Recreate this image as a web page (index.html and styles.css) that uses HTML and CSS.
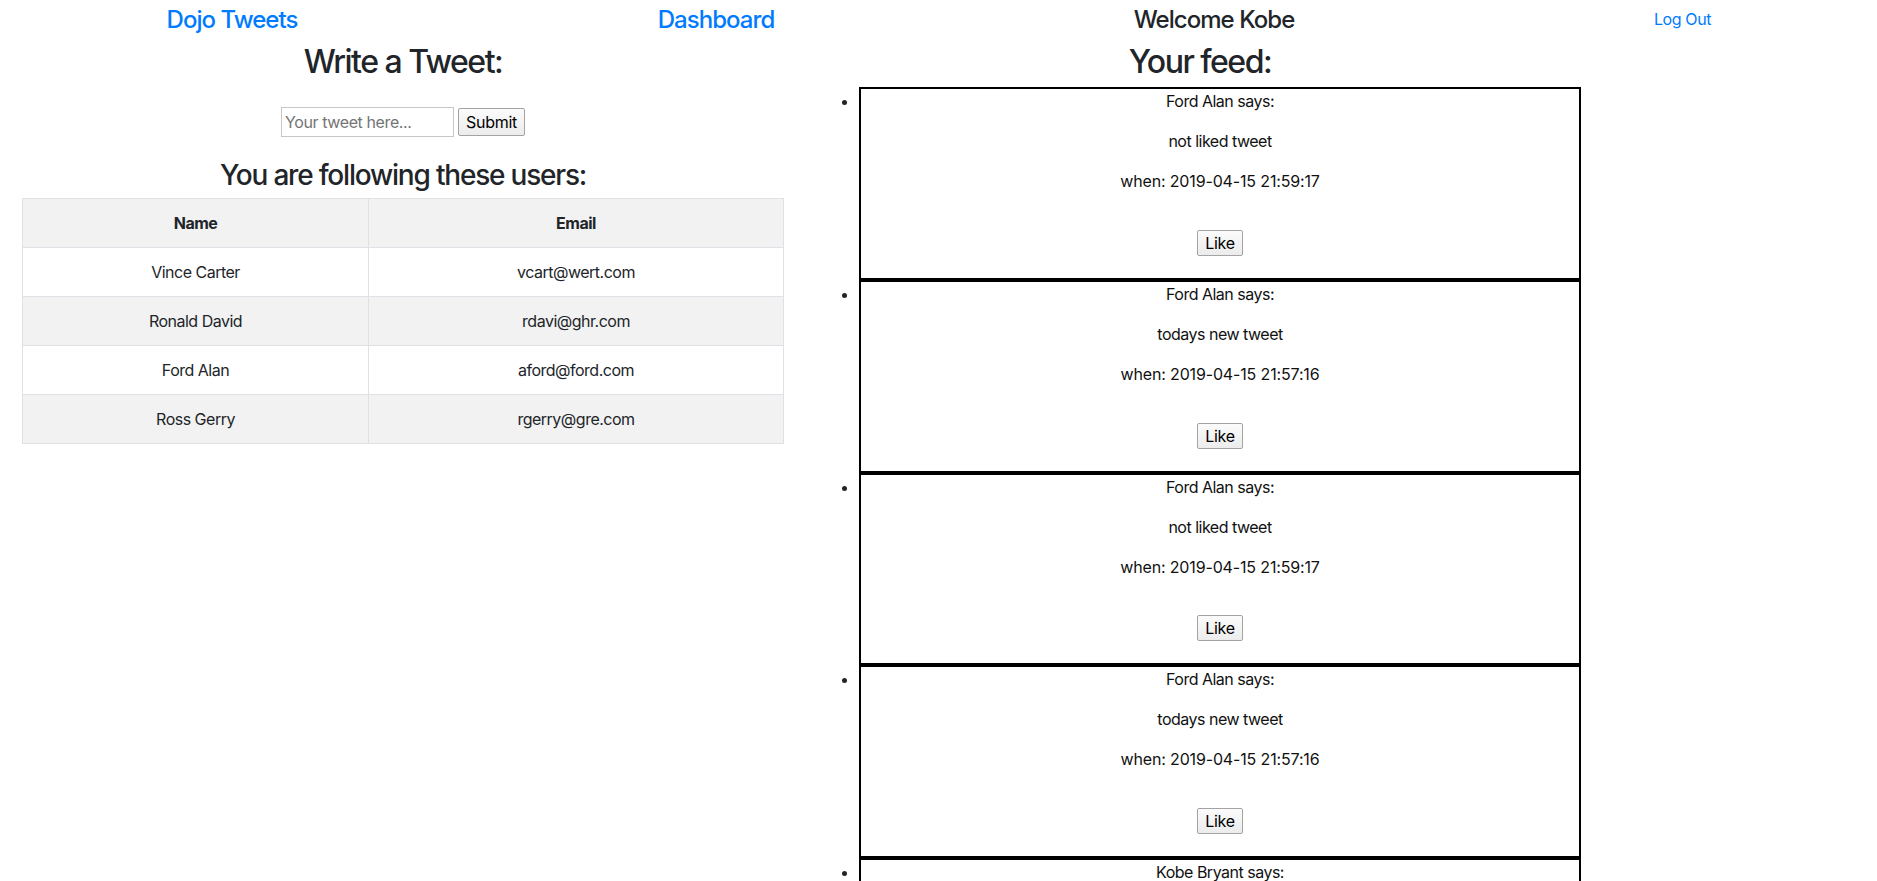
FILE: index.html
```html
<!DOCTYPE html>
<html lang="en">
<head>
<meta charset="utf-8">
<title>Dojo Tweets</title>
<link rel="stylesheet" href="styles.css">
</head>
<body>
<header class="topbar">
  <h4 class="nav-item nav-brand"><a href="#" class="link">Dojo Tweets</a></h4>
  <h4 class="nav-item nav-dash"><a href="#" class="link">Dashboard</a></h4>
  <h4 class="nav-item nav-welcome">Welcome Kobe</h4>
  <div class="nav-item nav-logout"><a href="#" class="link">Log Out</a></div>
</header>
<main class="page">
  <section class="col col-left">
    <h2 class="title">Write a Tweet:</h2>
    <form class="tweet-form">
      <input class="tweet-input" type="text" placeholder="Your tweet here...">
      <button class="btn" type="button">Submit</button>
    </form>
    <h3 class="subtitle">You are following these users:</h3>
    <table class="users">
      <thead>
        <tr><th class="c-name">Name</th><th class="c-email">Email</th></tr>
      </thead>
      <tbody>
        <tr><td>Vince Carter</td><td>vcart@wert.com</td></tr>
        <tr class="striped"><td>Ronald David</td><td>rdavi@ghr.com</td></tr>
        <tr><td>Ford Alan</td><td>aford@ford.com</td></tr>
        <tr class="striped"><td>Ross Gerry</td><td>rgerry@gre.com</td></tr>
      </tbody>
    </table>
  </section>
  <section class="col col-right">
    <h2 class="title">Your feed:</h2>
    <ul class="feed">
      <li><div class="tweet">
        <p>Ford Alan says:</p>
        <p>not liked tweet</p>
        <p class="when">when: 2019-04-15 21:59:17</p>
        <form class="like-form"><button class="btn" type="button">Like</button></form>
      </div></li>
      <li><div class="tweet">
        <p>Ford Alan says:</p>
        <p>todays new tweet</p>
        <p class="when">when: 2019-04-15 21:57:16</p>
        <form class="like-form"><button class="btn" type="button">Like</button></form>
      </div></li>
      <li><div class="tweet">
        <p>Ford Alan says:</p>
        <p>not liked tweet</p>
        <p class="when">when: 2019-04-15 21:59:17</p>
        <form class="like-form"><button class="btn" type="button">Like</button></form>
      </div></li>
      <li><div class="tweet">
        <p>Ford Alan says:</p>
        <p>todays new tweet</p>
        <p class="when">when: 2019-04-15 21:57:16</p>
        <form class="like-form"><button class="btn" type="button">Like</button></form>
      </div></li>
      <li><div class="tweet">
        <p>Kobe Bryant says:</p>
        <p>my first tweet</p>
        <p class="when">when: 2019-04-15 21:50:02</p>
        <form class="like-form"><button class="btn" type="button">Like</button></form>
      </div></li>
    </ul>
  </section>
</main>
</body>
</html>
```
FILE: styles.css
```css
html, body {
  margin: 0;
  padding: 0;
}
body {
  font-family: "Inter", "Noto Sans", "Liberation Sans", sans-serif;
  font-size: 16px;
  line-height: 24px;
  letter-spacing: -0.5px;
  color: #212529;
  background: #fff;
}
.link {
  color: #007bff;
  text-decoration: none;
}
.topbar {
  display: flex;
  align-items: flex-start;
  padding: 6px 0 0 112px;
  height: 34.8px;
}
.nav-item {
  width: 240px;
  flex: 0 0 240px;
  text-align: center;
  margin: 0;
}
h4.nav-item {
  font-size: 24px;
  line-height: 28.8px;
  font-weight: 500;
  letter-spacing: -0.04em;
}
.nav-dash { margin-left: 244px; }
.nav-welcome { margin-left: 258px; }
.nav-logout {
  margin-left: 228.5px;
  padding-top: 1px;
  letter-spacing: -0.4px;
}
.page {
  display: flex;
  gap: 35px;
  padding-left: 22px;
  align-items: flex-start;
}
.col {
  width: 762px;
  flex: 0 0 762px;
}
.title {
  margin: 0 0 6px;
  padding-top: 2px;
  font-size: 32px;
  line-height: 38.4px;
  font-weight: 500;
  letter-spacing: -0.047em;
  text-align: center;
}
.tweet-form {
  display: flex;
  justify-content: center;
  align-items: center;
  gap: 4px;
  padding: 20px 0 22px;
  margin: 0;
}
.tweet-input {
  box-sizing: border-box;
  width: 173px;
  height: 30px;
  border: 1px solid #c6c6c6;
  padding: 1px 3px;
  font-family: inherit;
  font-size: 16px;
  letter-spacing: -0.4px;
  color: #212529;
}
.tweet-input::placeholder {
  color: #757575;
}
.btn {
  box-sizing: border-box;
  font-family: inherit;
  font-size: 16px;
  line-height: 20px;
  letter-spacing: -0.3px;
  height: 26px;
  padding: 2px 7px;
  color: #000;
  background: linear-gradient(#fbfbfb, #ececec);
  border: 1px solid #a3a3a3;
  border-radius: 2px;
}
.tweet-form .btn {
  height: 28px;
}
.subtitle {
  margin: 0 0 5px;
  font-size: 28px;
  line-height: 33.6px;
  font-weight: 500;
  letter-spacing: -0.043em;
  text-align: center;
}
.users {
  width: 762px;
  border-collapse: collapse;
  text-align: center;
}
.users th, .users td {
  border: 1px solid #dee2e6;
  padding: 12px;
  line-height: 24px;
}
.users th {
  font-weight: 700;
  background: #f2f2f2;
}
.users .c-name { width: 321px; }
.users .striped td { background: #f2f2f2; }
.feed {
  margin: 0;
  padding-left: 40px;
}
.tweet {
  border: 2px solid #000;
  text-align: center;
  color: #111;
}
.tweet p {
  margin: 0 0 16px;
}
.tweet p.when {
  letter-spacing: -0.15px;
}
.like-form {
  margin: 0;
  padding: 20.7px 0 22px;
  display: flex;
  justify-content: center;
}
```
